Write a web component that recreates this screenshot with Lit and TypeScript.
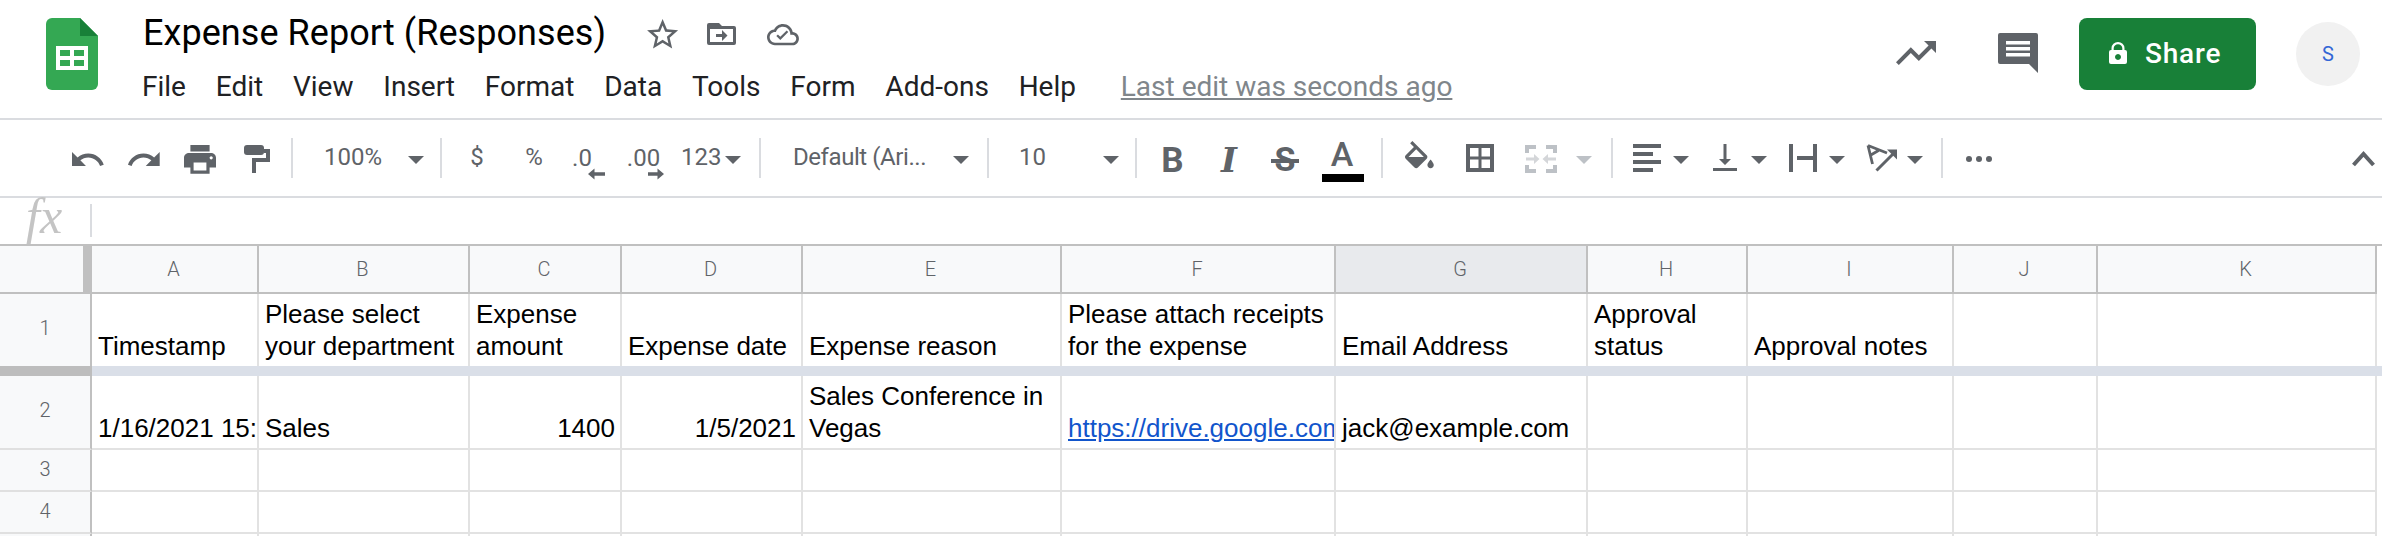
import { LitElement, html, css, svg } from "lit";
import { customElement } from "lit/decorators.js";

const G = "#5f6368";
const tri = (x: number, c = G) => svg`<polygon points="${x},156 ${x + 16},156 ${x + 8},164" fill=${c}></polygon>`;
const mat = (x: number, y: number, s: number, d: string, c = G) =>
  svg`<path transform="translate(${x} ${y}) scale(${s})" d=${d} fill=${c}></path>`;

// A toolbar slot: an SVG whose viewBox uses page x and y, so icons are drawn at measured coordinates.
const slot = (x0: number, x1: number, body: unknown) =>
  html`<svg class="slot" width=${x1 - x0} height="76" viewBox="${x0} 120 ${x1 - x0} 76">${body}</svg>`;
const sep = html`<span class="sep"></span>`;
const select = (w: number, l: number, r: number, text: string, cls = "") =>
  html`<div class="select" style="width:${w}px;padding:0 ${r}px 0 ${l}px">
    <span class="seltext ${cls}">${text}</span>
    <svg width="16" height="76" viewBox="0 120 16 76">${tri(0)}</svg>
  </div>`;
const label = (x: number, y: number, t: string, size = 24, weight = 400) =>
  svg`<text x=${x} y=${y} text-anchor="middle" font-family="Roboto" font-size=${size} font-weight=${weight} fill=${G}>${t}</text>`;

const cols = ["A", "B", "C", "D", "E", "F", "G", "H", "I", "J", "K"];

@customElement("app-root")
export class AppRoot extends LitElement {
  static styles = css`
    :host { display: block; width: 2382px; height: 536px; overflow: hidden; background: #fff; font-family: Roboto, sans-serif; }
    .header { display: flex; align-items: flex-start; height: 118px; border-bottom: 2px solid #dadce0; }
    .logo { margin-left: 46px; margin-top: 18px; flex: none; }
    .titles { margin-left: 44px; display: flex; flex-direction: column; }
    .titlerow { display: flex; height: 59px; }
    .title { width: 478px; flex: none; font-size: 36px; letter-spacing: 0.06px; line-height: 52px; padding-top: 7px; color: #000; white-space: nowrap; box-sizing: border-box; margin-left: 1px; }
    .menu { display: flex; align-items: baseline; margin-top: 8px; font-size: 28px; line-height: 40px; color: #202124; }
    .menu span { margin-right: 29.8px; }
    .menu .last { color: #80868b; text-decoration: underline; margin-left: 15px; margin-right: 0; white-space: nowrap; }
    .right { margin-left: auto; display: flex; align-items: flex-start; }
    .share { width: 177px; height: 72px; margin-top: 18px; background: #188038; border-radius: 8px; display: flex; align-items: center; color: #fff; font-size: 28px; font-weight: 500; box-sizing: border-box; padding: 0 0 2px 30px; letter-spacing: 0.8px; }
    .share span { margin-left: 18px; }
    .avatar { width: 64px; height: 64px; border-radius: 50%; background: #f1f1f1; margin: 22px 22px 0 40px; display: flex; align-items: center; justify-content: center; color: #3367d6; font-size: 20px; }
    .toolbar { display: flex; height: 76px; border-bottom: 2px solid #dadce0; padding-left: 58px; align-items: center; }
    .slot { flex: none; display: block; }
    .sep { flex: none; width: 2px; height: 40px; background: #dadce0; margin: 0 5px; }
    .sep.s10 { margin-left: 10px; }
    .sep.s17 { margin-left: 17px; }
    .select { flex: none; display: flex; align-items: center; justify-content: space-between; box-sizing: border-box; font-size: 24px; color: #5f6368; }
    .seltext { white-space: nowrap; margin-top: -3px; }
    .tight { letter-spacing: -0.43px; }
    .fbar { display: flex; height: 46px; align-items: flex-start; }
    .fx { width: 90px; box-sizing: border-box; padding-left: 26px; font: italic 50px/36px "Liberation Serif", serif; color: #c4c4c4; }
    .fsep { width: 2px; height: 33px; margin-top: 6px; background: #dadce0; }
    .grid { border-top: 2px solid #c0c0c0; }
    .row { display: grid; grid-template-columns: 92px 167px 211px 152px 181px 259px 274px 252px 160px 206px 144px 279px; }
    .r0 { height: 48px; }
    .r1 { height: 72px; }
    .r2 { height: 74px; }
    .r3 { height: 42px; }
    .c { box-sizing: border-box; border-right: 2px solid #e2e2e2; border-bottom: 2px solid #e2e2e2; padding: 0 2px 4px 6px; min-width: 0; overflow: hidden;
         font: 26px/32px "Liberation Sans", Arial, sans-serif; color: #000; display: flex; align-items: flex-end; }
    .r1 .c { border-bottom: 0; }
    .num { justify-content: flex-end; padding-right: 5px; }
    .clip { white-space: nowrap; overflow: hidden; padding-right: 0; }
    .link { color: #1155cc; text-decoration: underline; }
    .h { box-sizing: border-box; background: #f8f9fa; border-right: 2px solid #c0c0c0; border-bottom: 2px solid #c0c0c0; color: #5f6368; font-size: 20px; font-weight: 300; display: flex; align-items: center; justify-content: center; padding-right: 2px; }
    .h.sel { background: #e8eaed; }
    .h.wide { padding-left: 18px; padding-right: 0; }
    .corner { border-right-width: 9px; }
    .rh { box-sizing: border-box; background: #f8f9fa; border-right: 2px solid #c0c0c0; border-bottom: 2px solid #e0e0e0; color: #5f6368; font-size: 20px; font-weight: 300; display: flex; align-items: center; justify-content: center; padding-bottom: 4px; }
    .r1 .rh { border-bottom: 0; }
    .r3 .rh { padding-bottom: 2px; }
    .bar { display: flex; height: 10px; width: 2382px; background: #dadfe8; }
    .bar div { width: 92px; background: #bdbdbd; }
  `;

  render() {
    return html`
      <div class="header">
        <svg class="logo" width="52" height="72" viewBox="46 18 52 72">
          <path d="M52 18h28l18 18v48a6 6 0 0 1-6 6H52a6 6 0 0 1-6-6V24a6 6 0 0 1 6-6z" fill="#34a853"></path>
          <path d="M80 18l18 18H80z" fill="#188038"></path>
          <path fill-rule="evenodd" fill="#fff" d="M56 46h32v24H56z M60 50v6h10v-6z M74 50v6h10v-6z M60 60v6h10v-6z M74 60v6h10v-6z"></path>
        </svg>
        <div class="titles">
          <div class="titlerow">
            <div class="title">Expense Report (Responses)</div>
            <svg width="190" height="59" viewBox="621 0 190 59">
              ${mat(644, 16, 1.55, "M22 9.24l-7.19-.62L12 2 9.19 8.63 2 9.24l5.46 4.73L5.82 21 12 17.27 18.18 21l-1.63-7.03L22 9.24zM12 15.4l-3.76 2.27 1-4.28-3.32-2.88 4.38-.38L12 6.1l1.71 4.04 4.38.38-3.32 2.88 1 4.28L12 15.4z")}
              <path fill=${G} fill-rule="evenodd" d="M709 23h10l3 3h12a2 2 0 0 1 2 2v15a2 2 0 0 1-2 2h-25a2 2 0 0 1-2-2V25a2 2 0 0 1 2-2z M710 29v13h23V29z"></path>
              <path fill=${G} d="M722 30l5.5 5.5-5.5 5.5v-4h-6v-3h6z"></path>
              ${mat(767, 18.7, 1.33, "M19.35 10.04C18.67 6.59 15.64 4 12 4 9.11 4 6.6 5.64 5.35 8.04 2.34 8.36 0 10.91 0 14c0 3.31 2.69 6 6 6h13c2.76 0 5-2.24 5-5 0-2.64-2.05-4.78-4.65-4.96zM19 18H6c-2.21 0-4-1.79-4-4s1.79-4 4-4h.71C7.37 7.69 9.48 6 12 6c3.04 0 5.5 2.46 5.5 5.5v.5H19c1.66 0 3 1.34 3 3s-1.34 3-3 3z")}
              ${mat(767, 18.7, 1.33, "M10 16l-3-3 1.2-1.2L10 13.6l4.8-4.8L16 10z")}
            </svg>
          </div>
          <div class="menu">
            <span>File</span><span>Edit</span><span>View</span><span>Insert</span><span>Format</span><span>Data</span><span>Tools</span><span>Form</span><span>Add-ons</span><span>Help</span>
            <span class="last">Last edit was seconds ago</span>
          </div>
        </div>
        <div class="right">
          <svg width="199" height="118" viewBox="1880 0 199 118">
            ${mat(1892, 29, 2, "M16 6l2.29 2.29-4.88 4.88-4-4L2 16.59 3.41 18l6-6 4 4 6.3-6.29L22 12V6z")}
            <path fill=${G} d="M2000 33h36a2 2 0 0 1 2 2v38l-9-9h-29a2 2 0 0 1-2-2V35a2 2 0 0 1 2-2z"></path>
            <path fill="#fff" d="M2006 41h24v3.5h-24z M2006 47h24v3.5h-24z M2006 53h24v3.5h-24z"></path>
          </svg>
          <div class="share">
            <svg width="18" height="22" viewBox="0 0 18 22">
              <path fill="none" stroke="#fff" stroke-width="2.2" d="M3.6 8V6.2a5.4 5.1 0 0 1 10.8 0V8"></path>
              <path fill="#fff" fill-rule="evenodd" d="M2 8h14a2 2 0 0 1 2 2v10a2 2 0 0 1-2 2H2a2 2 0 0 1-2-2V10a2 2 0 0 1 2-2z M9 12a3 3 0 1 0 .01 0z"></path>
            </svg>
            <span>Share</span>
          </div>
          <div class="avatar">S</div>
        </div>
      </div>

      <div class="toolbar">
        ${slot(58, 116, mat(68.9, 141.15, 1.55, "M12.5 8c-2.65 0-5.05.99-6.9 2.6L2 7v9h9l-3.62-3.62c1.39-1.16 3.16-1.88 5.12-1.88 3.54 0 6.55 2.31 7.6 5.5l2.37-.78C21.08 11.03 17.15 8 12.5 8z"))}
        ${slot(116, 172, mat(125.6, 141.15, 1.55, "M18.4 10.6C16.55 8.99 14.15 8 11.5 8c-4.65 0-8.58 3.03-9.96 7.22L3.9 16c1.05-3.19 4.05-5.5 7.6-5.5 1.95 0 3.73.72 5.12 1.88L13 16h9V7l-3.6 3.6z"))}
        ${slot(172, 228, mat(180.8, 140.2, 1.6, "M19 8H5c-1.66 0-3 1.34-3 3v6h4v4h12v-4h4v-6c0-1.66-1.34-3-3-3zm-3 11H8v-5h8v5zm3-7c-.55 0-1-.45-1-1s.45-1 1-1 1 .45 1 1-.45 1-1 1zm-1-9H6v4h12V3z"))}
        ${slot(228, 286, svg`<rect x="244" y="145" width="20" height="10" rx="3" fill=${G}></rect>
          <path fill=${G} d="M264 149h6v13h-14v11h-4v-15h14v-5h-2z"></path>`)}
        ${sep}
        ${select(137, 26, 11, "100%")}
        ${sep}
        ${slot(447, 507, label(477, 165, "$"))}
        ${slot(507, 561, label(534, 165, "%"))}
        ${slot(561, 618, svg`${label(582, 166, ".0")}<path fill=${G} d="M588 174l6.5-5.5v3.7h10.5v3.6h-10.5v3.7z"></path>`)}
        ${slot(618, 672, svg`${label(643.5, 166, ".00")}<path fill=${G} d="M664 174l-6.5-5.5v3.7h-9.5v3.6h9.5v3.7z"></path>`)}
        ${select(82, 9, 13, "123")}
        ${sep}
        ${select(216, 27, 13, "Default (Ari...", "tight")}
        ${sep}
        ${select(136, 25, 11, "10")}
        ${sep}
        ${slot(1142, 1203, label(1172.5, 172, "B", 35, 700))}
        ${slot(1203, 1255, svg`<text x="1229" y="172" text-anchor="middle" font-family="DejaVu Serif" font-style="italic" font-weight="700" font-size="34" fill=${G}>I</text>`)}
        ${slot(1255, 1315, svg`${label(1285, 171, "S", 34, 700)}<rect x="1271" y="159" width="28" height="4" fill=${G}></rect>`)}
        ${slot(1315, 1371, svg`${label(1342, 166, "A", 34, 500)}<rect x="1322" y="174" width="42" height="8" fill="#000"></rect>`)}
        <span class="sep s10"></span>
        ${slot(1388, 1452, mat(1400.2, 141, 1.6, "M16.56 8.94L7.62 0 6.21 1.41l2.38 2.38-5.15 5.15c-.59.59-.59 1.54 0 2.12l5.5 5.5c.29.29.68.44 1.06.44s.77-.15 1.06-.44l5.5-5.5c.59-.58.59-1.53 0-2.12zM5.21 10L10 5.21 14.79 10H5.21zM19 11.5s-2 2.17-2 3.5c0 1.1.9 2 2 2s2-.9 2-2c0-1.33-2-3.5-2-3.5z"))}
        ${slot(1452, 1508, svg`<path fill=${G} fill-rule="evenodd" d="M1466 144h28v28h-28z M1470 148v8.5h8.5V148z M1481.5 148v8.5h8.5V148z M1470 159.5v8.5h8.5v-8.5z M1481.5 159.5v8.5h8.5v-8.5z"></path>`)}
        ${slot(1508, 1574, svg`<path fill="#bdc1c6" d="M1525 145h11v4h-7v4h-4z M1546 145h11v8h-4v-4h-7z M1525 165h4v4h7v4h-11z M1553 165h4v8h-11v-4h7z"></path>
          <path fill="#d4d6d9" d="M1526 157.5h8v-3.5l5.5 5-5.5 5v-3.5h-8z M1556 157.5h-8v-3.5l-5.5 5 5.5 5v-3.5h8z"></path>`)}
        ${slot(1574, 1594, tri(1576, "#bdc1c6"))}
        <span class="sep s17"></span>
        ${slot(1618, 1694, svg`<path fill=${G} d="M1633 144h28v4h-28z M1633 152h20v4h-20z M1633 160h28v4h-28z M1633 168h20v4h-20z"></path>${tri(1673)}`)}
        ${slot(1694, 1772, svg`${mat(1707, 139.5, 1.5, "M16 13h-3V3h-2v10H8l4 4 4-4zM4 19v2h16v-2H4z")}${tri(1751)}`)}
        ${slot(1772, 1850, svg`<path fill=${G} d="M1789 144h4v28h-4z M1813 144h4v28h-4z M1797 156h16v4h-16z"></path>${tri(1829)}`)}
        ${slot(1850, 1936, svg`<path fill="none" stroke=${G} stroke-width="2.8" d="M1868 145.5l19 7.5M1868 145.5l4.5 18.5M1870 155.5l8.5-5"></path>
          <path fill="none" stroke=${G} stroke-width="3" d="M1876.5 170.5l19-19"></path>
          <path fill=${G} d="M1897 149.5v10l-3-3-4-4-3-3z"></path>${tri(1907)}`)}
        ${sep}
        ${slot(1948, 2005, svg`<circle cx="1969" cy="159" r="3" fill=${G}></circle><circle cx="1979" cy="159" r="3" fill=${G}></circle><circle cx="1989" cy="159" r="3" fill=${G}></circle>`)}
        ${slot(2005, 2382, svg`<path fill="none" stroke=${G} stroke-width="4" d="M2353.5 165l10-11 10 11"></path>`)}
      </div>

      <div class="fbar">
        <div class="fx">fx</div>
        <div class="fsep"></div>
      </div>

      <div class="grid">
        <div class="row r0">
          <div class="h corner"></div>
          ${cols.map((c) => html`<div class="h ${c === "G" ? "sel" : ""} ${c === "K" ? "wide" : ""}">${c}</div>`)}
        </div>
        <div class="row r1">
          <div class="rh">1</div>
          <div class="c">Timestamp</div>
          <div class="c">Please select your department</div>
          <div class="c">Expense amount</div>
          <div class="c">Expense date</div>
          <div class="c">Expense reason</div>
          <div class="c">Please attach receipts for the expense</div>
          <div class="c">Email Address</div>
          <div class="c">Approval status</div>
          <div class="c">Approval notes</div>
          <div class="c"></div>
          <div class="c"></div>
        </div>
        <div class="bar"><div></div></div>
        <div class="row r2">
          <div class="rh">2</div>
          <div class="c clip">1/16/2021 15:</div>
          <div class="c">Sales</div>
          <div class="c num">1400</div>
          <div class="c num">1/5/2021</div>
          <div class="c">Sales Conference in Vegas</div>
          <div class="c clip"><span class="link">https://drive.google.com</span></div>
          <div class="c">jack@example.com</div>
          <div class="c"></div><div class="c"></div><div class="c"></div><div class="c"></div>
        </div>
        ${[3, 4].map(
          (n) => html`<div class="row r3">
            <div class="rh">${n}</div>
            ${cols.map(() => html`<div class="c"></div>`)}
          </div>`
        )}
        <div class="row r3">
          <div class="rh"></div>
          ${cols.map(() => html`<div class="c"></div>`)}
        </div>
      </div>
    `;
  }
}
